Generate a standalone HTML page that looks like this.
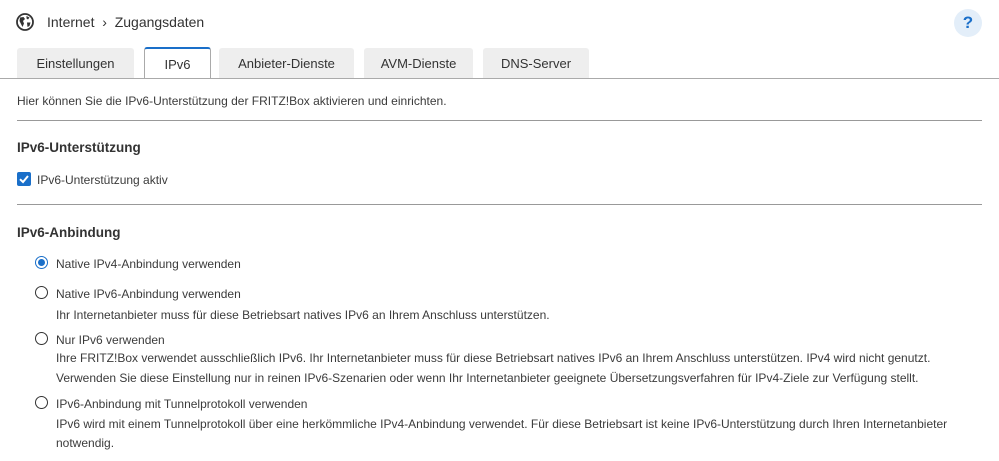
<!DOCTYPE html>
<html><head><meta charset="utf-8"><style>
body{margin:0;width:999px;height:461px;background:#fff;font-family:"Liberation Sans",sans-serif;color:#3b3b3b;position:relative;overflow:hidden}
.a{position:absolute;white-space:nowrap;font-size:12px;line-height:14px}
.h{font-weight:bold;font-size:13.5px;color:#333}
.tab{position:absolute;top:48px;height:30px;background:#eeeeee;border-radius:3px 3px 0 0;font-size:13px;line-height:31px;text-align:center;color:#333}
.hr{position:absolute;left:17px;width:965px;height:1px;background:#999}
.r{position:absolute;width:11px;height:11px;border:1.5px solid #333;border-radius:50%;left:35px}
</style></head><body>
<svg style="position:absolute;left:16px;top:13px" width="18" height="18" viewBox="0 0 18 18"><circle cx="9" cy="9" r="8" fill="none" stroke="#333" stroke-width="1.8"/><path d="M4 4.5 L7.5 4 L9 6 L7 8 L8 10.5 L6.5 14 L5 11 L3.5 8 Z M10.5 3 L13.5 4.5 L12 6.5 L10.5 5.5Z M11 9.5 L14.5 9.5 L13.5 13 L11.5 14Z" fill="#333"/></svg>
<div class="a" style="left:47px;top:14px;font-size:14px;line-height:17px;color:#333">Internet &nbsp;›&nbsp; Zugangsdaten</div>
<div style="position:absolute;left:954px;top:9px;width:28px;height:28px;border-radius:50%;background:#e3eef9;color:#1a6fc9;font-weight:bold;font-size:17px;line-height:28px;text-align:center">?</div>
<div class="tab" style="left:17px;width:117px">Einstellungen</div>
<div class="tab" style="left:144px;width:65px;background:#fff;border:1px solid #aaa;border-bottom:none;border-top:2px solid #1a6fc9;height:29px;top:47px;z-index:2">IPv6</div>
<div class="tab" style="left:219px;width:135px">Anbieter-Dienste</div>
<div class="tab" style="left:364px;width:109px">AVM-Dienste</div>
<div class="tab" style="left:483px;width:106px">DNS-Server</div>
<div style="position:absolute;left:0;top:78px;width:999px;height:1px;background:#aaa"></div>
<div class="a" style="left:17px;top:94px">Hier können Sie die IPv6-Unterstützung der FRITZ!Box aktivieren und einrichten.</div>
<div class="hr" style="top:120px"></div>
<div class="a h" style="left:17px;top:141px">IPv6-Unterstützung</div>
<div style="position:absolute;left:17px;top:172px;width:14px;height:14px;background:#1a6fc9;border-radius:2px"><svg width="14" height="14"><path d="M3 7.2 L6 10 L11 4" stroke="#fff" stroke-width="2" fill="none"/></svg></div>
<div class="a" style="left:37px;top:173px">IPv6-Unterstützung aktiv</div>
<div class="hr" style="top:204px"></div>
<div class="a h" style="left:17px;top:226px">IPv6-Anbindung</div>
<div class="r" style="top:256px;border-color:#1a6fc9"><div style="position:absolute;left:2px;top:2px;width:7px;height:7px;border-radius:50%;background:#1a6fc9"></div></div>
<div class="a" style="left:56px;top:257px">Native IPv4-Anbindung verwenden</div>
<div class="r" style="top:286px"></div>
<div class="a" style="left:56px;top:287px">Native IPv6-Anbindung verwenden</div>
<div class="a" style="left:56px;top:308px">Ihr Internetanbieter muss für diese Betriebsart natives IPv6 an Ihrem Anschluss unterstützen.</div>
<div class="r" style="top:332px"></div>
<div class="a" style="left:56px;top:333px">Nur IPv6 verwenden</div>
<div class="a" style="left:56px;top:351px">Ihre FRITZ!Box verwendet ausschließlich IPv6. Ihr Internetanbieter muss für diese Betriebsart natives IPv6 an Ihrem Anschluss unterstützen. IPv4 wird nicht genutzt.</div>
<div class="a" style="left:56px;top:371px">Verwenden Sie diese Einstellung nur in reinen IPv6-Szenarien oder wenn Ihr Internetanbieter geeignete Übersetzungsverfahren für IPv4-Ziele zur Verfügung stellt.</div>
<div class="r" style="top:396px"></div>
<div class="a" style="left:56px;top:397px">IPv6-Anbindung mit Tunnelprotokoll verwenden</div>
<div class="a" style="left:56px;top:417px">IPv6 wird mit einem Tunnelprotokoll über eine herkömmliche IPv4-Anbindung verwendet. Für diese Betriebsart ist keine IPv6-Unterstützung durch Ihren Internetanbieter</div>
<div class="a" style="left:56px;top:436px">notwendig.</div>
</body></html>
